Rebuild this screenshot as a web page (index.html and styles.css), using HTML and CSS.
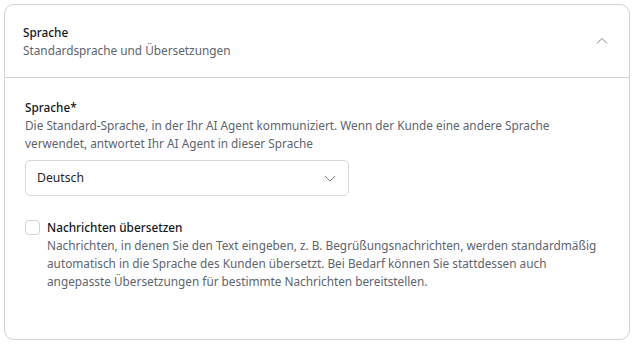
FILE: index.html
```html
<!DOCTYPE html>
<html lang="de">
<head>
<meta charset="utf-8">
<link rel="stylesheet" href="styles.css">
</head>
<body>
<section class="card">
  <header class="card-header">
    <div class="head-text">
      <div class="title">Sprache</div>
      <div class="subtitle">Standardsprache und Übersetzungen</div>
    </div>
    <svg class="chev-up" width="12" height="8" viewBox="0 0 12 8"><path d="M1 6.5 L6 1.5 L11 6.5" fill="none" stroke="#7b8390" stroke-width="1"/></svg>
  </header>
  <div class="card-body">
    <div class="field">
      <div class="label">Sprache*</div>
      <div class="desc">Die Standard-Sprache, in der Ihr AI Agent kommuniziert. Wenn der Kunde eine andere Sprache verwendet, antwortet Ihr AI Agent in dieser Sprache</div>
      <div class="select">
        <span>Deutsch</span>
        <svg width="12" height="7" viewBox="0 0 12 7"><path d="M1 1 L6 6 L11 1" fill="none" stroke="#7b8390" stroke-width="1"/></svg>
      </div>
    </div>
    <div class="check-row">
      <span class="checkbox"></span>
      <div class="check-text">
        <div class="label">Nachrichten übersetzen</div>
        <div class="desc">Nachrichten, in denen Sie den Text eingeben, z. B. Begrüßungsnachrichten, werden standardmäßig automatisch in die Sprache des Kunden übersetzt. Bei Bedarf können Sie stattdessen auch angepasste Übersetzungen für bestimmte Nachrichten bereitstellen.</div>
      </div>
    </div>
  </div>
</section>
</body>
</html>
```

FILE: styles.css
```css
html, body {
  margin: 0;
  padding: 0;
  background: #ffffff;
}
body {
  padding: 4px;
  font-family: "Noto Sans", "Open Sans", sans-serif;
  font-size: 11.8px;
  line-height: 18px;
  color: #1f2329;
}
.card {
  box-sizing: border-box;
  width: 626px;
  height: 336px;
  border: 1px solid #cfd3d8;
  border-radius: 10px;
  background: #fff;
}
.card-header {
  display: flex;
  align-items: center;
  justify-content: space-between;
  padding: 18px 21px 18px 18px;
  border-bottom: 1px solid #cfd3d8;
}
.title {
  color: #14181d;
  font-weight: 500;
}
.subtitle {
  color: #5d646e;
}
.card-body {
  padding: 20px 20px 0 20px;
}
.label {
  color: #14181d;
  font-weight: 500;
}
.desc {
  color: #5d646e;
}
.select {
  box-sizing: border-box;
  margin-top: 8px;
  width: 324px;
  height: 36px;
  border: 1px solid #d5d9de;
  border-radius: 5px;
  display: flex;
  align-items: center;
  justify-content: space-between;
  padding: 0 12px 0 11px;
  color: #1f2329;
  font-size: 12.2px;
}
.check-row {
  display: flex;
  gap: 7px;
  margin-top: 22px;
}
.checkbox {
  box-sizing: border-box;
  flex: none;
  width: 15px;
  height: 15px;
  margin-top: 2px;
  border: 1px solid #cfd3d8;
  border-radius: 4px;
}
```
